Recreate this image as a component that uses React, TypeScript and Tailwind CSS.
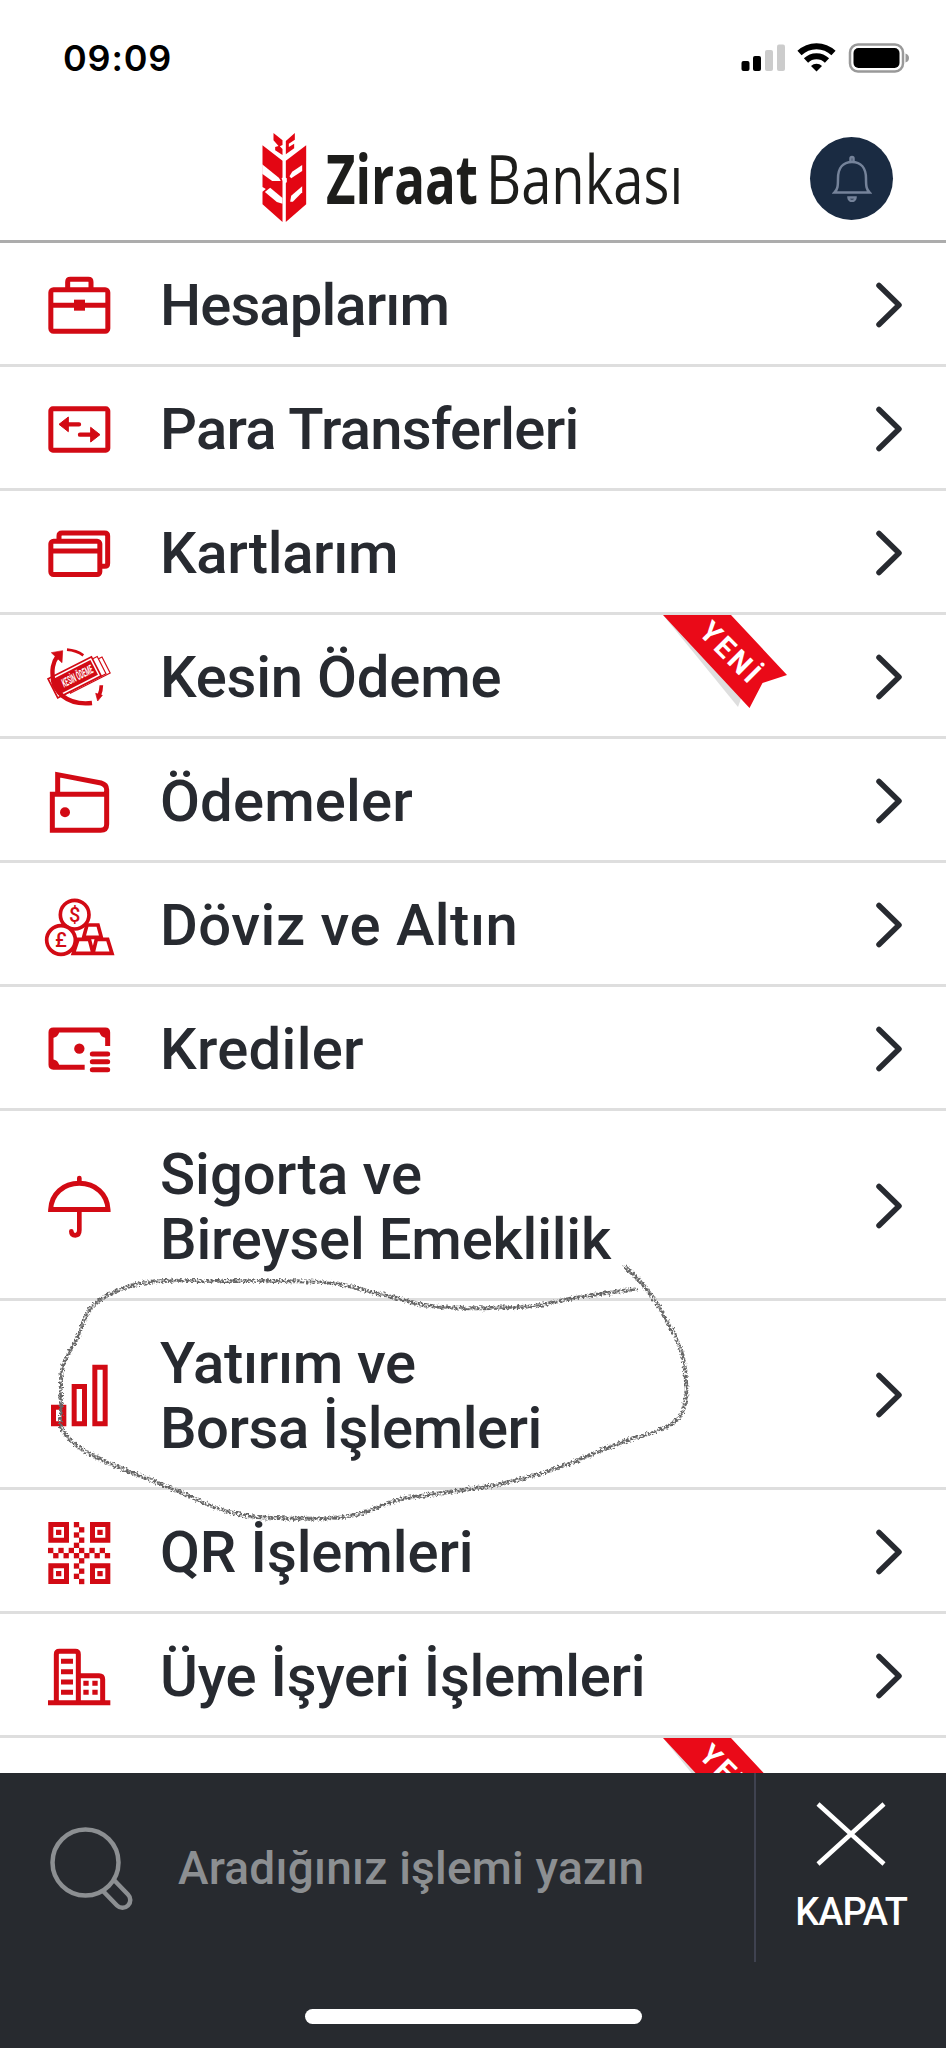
import React from 'react';
import type { ReactNode } from 'react';

const RED = '#d20a14';

const QR_DOTS = [
  [0, 5], [1, 6], [2, 5], [3, 6], [4, 5], [5, 0], [6, 1], [5, 2], [6, 3], [5, 4], [6, 5], [5, 6],
  [6, 7], [5, 8], [6, 9], [5, 10], [6, 11], [7, 6], [8, 5], [9, 6], [10, 5], [11, 6],
];

function Icon({ viewBox, children }: { viewBox: string; children: ReactNode }) {
  return (
    <svg viewBox={viewBox} className="h-[72px] w-[72px] shrink-0 overflow-visible" fill="none" stroke={RED} strokeWidth={15}>
      {children}
    </svg>
  );
}

const AccountsIcon = () => (
  <Icon viewBox="42 22 216 216">
    <rect x="62.500" y="87.500" width="171" height="124" rx="8" />
    <path d="M113 84V64q0-8 8-8h54q8 0 8 8v20M62 134h171" />
    <rect x="132" y="117" width="33" height="33" fill={RED} stroke="none" />
  </Icon>
);

const TransferIcon = () => (
  <Icon viewBox="42 394 216 216">
    <rect x="62.500" y="444.500" width="171" height="124" rx="6" />
    <path d="M112 491h35M150 522h35" strokeWidth={13} strokeLinecap="round" />
    <path d="M87 491l28-22v44zM210 522l-28-22v44z" fill={RED} strokeWidth={3} strokeLinejoin="round" />
  </Icon>
);

const CardsIcon = () => (
  <Icon viewBox="42 766 216 216">
    <rect x="62.500" y="841.500" width="147" height="100" rx="8" />
    <path d="M62 871h147M87 840v-14q0-9 9-9h128q9 0 9 9v82q0 9-9 9h-10" />
  </Icon>
);

const SurePaymentIcon = () => (
  <Icon viewBox="42 58 216 216">
    <g transform="rotate(-27 148 165)">
      <path d="M100 146h134v54H100z" fill="#fff" strokeWidth={3.5} />
      <path d="M84 138h138v58H84z" fill="#fff" strokeWidth={3.5} />
      <path d="M60 131h146v64H60z" fill="#fff" strokeWidth={5} />
      <path d="M67 138h132v50H67z" fill={RED} stroke="none" />
      <text
        x="142"
        y="176"
        textAnchor="middle"
        textLength="100"
        lengthAdjust="spacingAndGlyphs"
        fontSize="36"
        fontStyle="italic"
        fontWeight="700"
        fill="#fff"
        stroke="none"
        fontFamily="Roboto, sans-serif"
      >
        KESİN ÖDEME
      </text>
    </g>
    <path d="M70 182C64 146 68 126 84 104" strokeWidth={13} />
    <path d="M68 176C72 206 104 256 186 247" strokeWidth={13} />
    <path d="M64 96l34-6l-2 36l-12-11z" fill={RED} strokeWidth={2} />
    <path d="M111 87q28 2 49 17" strokeWidth={8} />
    <path d="M214 194q0 16-7 32" strokeWidth={11} />
    <path d="M197 218l20 6l-14 17z" fill={RED} strokeWidth={2} />
  </Icon>
);

const WalletIcon = () => (
  <Icon viewBox="42 430 216 216">
    <path d="M67 520.500h155q8 0 8 8v82q0 18-18 18H67zM83 520v-58l130 25q17 5 17 20v24" />
    <circle cx="105" cy="575" r="15" fill={RED} stroke="none" />
  </Icon>
);

const GoldIcon = () => (
  <Icon viewBox="42 802 216 216">
    <g strokeWidth={11}>
      <path d="M161 950l10-37h33l10 37zM130 998l14-42h34l11 42zM189 998l10-42h34l13 42z" />
      <circle cx="134" cy="882" r="43" fill="#fff" />
      <circle cx="93" cy="958" r="43" fill="#fff" />
    </g>
    <g fill={RED} stroke="none" textAnchor="middle" fontFamily="Roboto, sans-serif" fontWeight="500">
      <text x="134" y="903" fontSize="60">$</text>
      <text x="93" y="979" fontSize="60">£</text>
    </g>
  </Icon>
);

const LoanIcon = () => (
  <Icon viewBox="42 34 216 216">
    <path d="M164 199.500H70q-7 0-7-7V95q0-7 7-7h156q7 0 7 7v41" />
    <path d="M68 94h20q-4 16-20 18zM228 94h-20q4 16 20 18zM68 194h20q-4-16-20-18z" fill={RED} stroke="none" />
    <circle cx="148" cy="144" r="15.500" fill={RED} stroke="none" />
    <path d="M187 160h46M187 183h46M187 207h46" strokeLinecap="round" />
  </Icon>
);

const UmbrellaIcon = () => (
  <Icon viewBox="42 505 216 216">
    <path d="M62 626.500C64 580 100 548 148 548s84 32 86 78.500z" />
    <path d="M148 546v-14M148 632v57q0 15-12 15t-12-12" strokeLinecap="round" strokeWidth={14} />
  </Icon>
);

const ChartIcon = () => (
  <Icon viewBox="42 23 216 216">
    <path d="M70.500 170.500h31v50h-31zM132.500 108.500h31v112h-31zM194.500 50.500h31v170h-31z" />
  </Icon>
);

const QrIcon = () => (
  <Icon viewBox="42 492 216 216">
    <path d="M62.500 520.500h47v47h-47zM187.500 520.500h46v47h-46zM62.500 644.500h47v47h-47zM187.500 644.500h46v47h-46z" />
    <g fill={RED} stroke="none">
      <path d="M78 536h16v16H78zM202 536h16v16h-16zM78 660h16v16H78zM202 660h16v16h-16z" />
      {QR_DOTS.map(([x, y]) => (
        <rect key={`${x}-${y}`} x={54 + x * 15.5} y={513 + y * 15.5} width="16" height="16" />
      ))}
    </g>
  </Icon>
);

const MerchantIcon = () => (
  <Icon viewBox="42 864 216 216">
    <path d="M79 1050V910q0-9 9-9h48q9 0 9 9v140M145 974h62q11 0 11 11v65M54 1055.500h187" />
    <path d="M93 931h36M93 962h36M93 993h36M93 1024h36M160 997h16M187 997h16M160 1024h16M187 1024h16" />
  </Icon>
);

const MENU_ITEMS = [
  { icon: AccountsIcon, lines: [{ text: 'Hesaplarım', tracking: 'tracking-[-0.9px]' }] },
  { icon: TransferIcon, lines: [{ text: 'Para Transferleri', tracking: 'tracking-[-0.7px]' }] },
  { icon: CardsIcon, lines: [{ text: 'Kartlarım', tracking: 'tracking-[-0.35px]' }] },
  { icon: SurePaymentIcon, lines: [{ text: 'Kesin Ödeme', tracking: 'tracking-[-0.2px]' }], isNew: true },
  { icon: WalletIcon, lines: [{ text: 'Ödemeler', tracking: 'tracking-[0.15px]' }] },
  { icon: GoldIcon, lines: [{ text: 'Döviz ve Altın', tracking: 'tracking-[0.5px]' }] },
  { icon: LoanIcon, lines: [{ text: 'Krediler', tracking: 'tracking-[0.3px]' }] },
  {
    icon: UmbrellaIcon,
    lines: [
      { text: 'Sigorta ve', tracking: 'tracking-normal' },
      { text: 'Bireysel Emeklilik', tracking: 'tracking-[-0.2px]' },
    ],
    height: 'h-[190px]',
  },
  {
    icon: ChartIcon,
    lines: [
      { text: 'Yatırım ve', tracking: 'tracking-[-0.35px]' },
      { text: 'Borsa İşlemleri', tracking: 'tracking-[-0.5px]' },
    ],
    height: 'h-[189px]',
  },
  { icon: QrIcon, lines: [{ text: 'QR İşlemleri', tracking: 'tracking-[-0.1px]' }] },
  { icon: MerchantIcon, lines: [{ text: 'Üye İşyeri İşlemleri', tracking: 'tracking-[-0.25px]' }] },
];

function NewRibbon() {
  return (
    <svg viewBox="0 0 126 96" className="absolute left-[662px] top-0 h-24 w-[126px]">
      <path d="M1 0L76 92l5-14z" fill="#dedede" />
      <path d="M1 0h68l56 60l-24.500 8L87.500 93z" fill="#ea0a18" />
      <text
        x="68"
        y="37"
        transform="rotate(45 68 37)"
        textAnchor="middle"
        dominantBaseline="central"
        fontFamily="Roboto, sans-serif"
        fontWeight="700"
        fontSize="29"
        textLength="72"
        fill="#fff"
      >
        YENİ
      </text>
    </svg>
  );
}

function StatusBar() {
  return (
    <div className="flex h-[116px] items-center justify-between pl-[63px] pr-[34px]">
      <span className="font-[Inter,sans-serif] text-[36px] font-semibold tracking-[0.8px] text-black">09:09</span>
      <svg viewBox="740 40 172 36" className="h-9 w-[172px]">
        <rect x="741.500" y="61" width="8" height="10" rx="2" />
        <rect x="753" y="56" width="8" height="15" rx="2" />
        <rect x="765" y="50" width="8" height="21" rx="2" fill="#ccc" />
        <rect x="777" y="44.500" width="8" height="26.500" rx="2" fill="#ccc" />
        <g fill="none" stroke="#000" strokeWidth="6">
          <path d="M799.500 53a24.500 24.500 0 0 1 34 0M806 60.500a15 15 0 0 1 21 0" />
        </g>
        <path d="M816.500 71.500l-5.500-5.500a8 8 0 0 1 11 0z" />
        <rect x="850" y="44.500" width="53" height="27" rx="8" fill="none" stroke="#999" strokeWidth="2.500" />
        <rect x="853.500" y="48" width="46" height="20" rx="5" />
        <path d="M905.500 53.500q3.500 1 3.500 4.500t-3.500 4.500z" fill="#999" />
      </svg>
    </div>
  );
}

function Header() {
  return (
    <header className="h-[243px] border-b-[3px] border-[#acacac]">
      <StatusBar />
      <div className="flex h-[124px] items-center pl-[262px] pr-[53px]">
        {/* wheat ear */}
        <svg viewBox="68 38 134 270" className="h-[90px] w-[45px] shrink-0" fill="#e30613">
          <path d="M102 38l27 22v14l-8 4l8 8v18l-22-14V80l10-3l-15-17z" />
          <path d="M166 38v20l-18 12v10l16-10v14l-25 18V62z" />
          <path d="M69 75l60 46v184l-60-53v-38l10-8l-10-6z" />
          <path d="M200 75l-61 46v184l61-53z" />
          <g fill="#fff">
            <path d="M68 132l50 40l6 10H98l-30-22z" />
            <path d="M92 202l37 31v17l-17-5l-36-30z" />
            <path d="M188 134v18l-33 22l-5-6l8-14z" />
            <path d="M188 198v18l-28 28h-8l3-18z" />
            <path d="M126 174l8-4l8 4v12l-8 4z" />
          </g>
        </svg>
        <div className="ml-[19px] flex w-[370px] items-center whitespace-nowrap font-['Open_Sans',sans-serif] text-[68px] leading-none text-[#1d1d1b]">
          <span className="w-[160px] origin-left scale-x-[0.75] font-bold">Ziraat</span>
          <span className="origin-left scale-x-[0.8] font-[450]">Bankası</span>
        </div>
        <div className="ml-auto flex h-[83px] w-[83px] items-center justify-center rounded-full bg-[#1a2b42]">
          <svg viewBox="0 0 40 48" className="h-12 w-10" fill="none" stroke="#75839a" strokeWidth="2.500">
            <path d="M2.500 38.500c3-3 3.500-6 3.500-14C6 14 11 8 20 8s14 6 14 16.500c0 8 .5 11 3.500 14z" />
            <path d="M18.500 7V4.500a1.500 1.500 0 0 1 3 0V7M16.500 43.500a3.500 3.500 0 0 0 7 0z" />
          </svg>
        </div>
      </div>
    </header>
  );
}

function MenuList() {
  return (
    <nav>
      {MENU_ITEMS.map(({ lines, icon: ItemIcon, height, isNew }) => (
        <a
          key={lines[0].text}
          className={`relative flex items-center border-b-[3px] border-[#dedede] px-11 ${height ?? 'h-[124px]'}`}
        >
          <ItemIcon />
          <span className="ml-11 flex flex-col whitespace-nowrap pt-1 text-[58px] font-medium leading-[65px]">
            {lines.map(({ text, tracking }) => (
              <span key={text} className={tracking}>{text}</span>
            ))}
          </span>
          <svg viewBox="0 0 26 46" className="ml-auto mt-0.5 h-[46px] w-[26px]" fill="none" stroke="#272a30" strokeWidth="5.500">
            <path d="M3 3.500l20 19.500L3 42.500" strokeLinecap="round" strokeLinejoin="round" />
          </svg>
          {isNew && <NewRibbon />}
        </a>
      ))}
      <div className="relative h-[35px] overflow-hidden">
        <NewRibbon />
      </div>
    </nav>
  );
}

function SearchFooter() {
  return (
    <footer className="flex h-[275px] flex-col items-center bg-[#272a2f]">
      <div className="flex h-[189px] w-full">
        <div className="flex flex-1 items-center border-r-2 border-[#3f4250] pl-[50px] pt-0.5">
          <svg viewBox="0 0 84 84" className="h-[84px] w-[84px]" fill="none" stroke="#8c8f92" strokeWidth="4.500">
            <circle cx="35.500" cy="35.500" r="33" />
            <path d="M53 64l14 14.500a7.500 7.500 0 0 0 11-11L64 53" />
          </svg>
          <span className="ml-11 whitespace-nowrap text-[46px] font-medium tracking-[0.2px] text-[#8c8f92]">
            Aradığınız işlemi yazın
          </span>
        </div>
        <button className="flex w-[190px] flex-col items-center pt-[29px] text-white">
          <svg viewBox="0 0 72 64" className="h-16 w-[72px]" stroke="currentColor" strokeWidth="4.500">
            <path d="M3 2l66 60M69 2L3 62" />
          </svg>
          <span className="mt-[21px] text-[38px] font-medium leading-[50px] tracking-[-1px]">KAPAT</span>
        </button>
      </div>
      <div className="mt-[47px] h-[15px] w-[337px] rounded-full bg-white" />
    </footer>
  );
}

// Freehand pencil loop around the investment row
function PencilLoop() {
  return (
    <svg viewBox="0 0 720 300" className="pointer-events-none absolute left-0 top-[1240px] h-[300px] w-[720px]" fill="none">
      <filter id="pencil" x="-5%" y="-5%" width="110%" height="110%">
        <feTurbulence type="fractalNoise" baseFrequency="0.45" numOctaves="2" seed="4" result="noise" />
        <feDisplacementMap in="SourceGraphic" in2="noise" scale="5" xChannelSelector="R" yChannelSelector="G" result="rough" />
        <feColorMatrix in="noise" type="matrix" values="0 0 0 0 0  0 0 0 0 0  0 0 0 0 0  0 0 4 0 -1.2" result="grain" />
        <feComposite in="rough" in2="grain" operator="in" />
      </filter>
      <path
        filter="url(#pencil)"
        stroke="#666"
        strokeWidth="4"
        d="M638 49C615 52 595 54 574 58S540 67 519 67S485 69 464 68S430 67 418 64S395 57 376 53S350 45 331 43S300 41 275 41H184Q160 40 142 43Q118 48 101 59Q88 68 83 83T69 113Q61 125 61 140V187Q66 199 83 210Q108 224 138 235T202 262Q230 275 257 277Q300 280 331 278Q350 277 367 272Q390 260 413 257T496 245Q538 236 574 222Q606 208 634 198Q652 194 666 187Q680 180 682 173Q688 155 686 143Q686 130 682 113Q677 97 666 80Q659 64 647 50Q639 39 624 26"
      />
    </svg>
  );
}

export default function App() {
  return (
    <div className="relative h-[2048px] w-[946px] overflow-hidden bg-white font-[Roboto,sans-serif] text-[#272a30]">
      <Header />
      <MenuList />
      <SearchFooter />
      <PencilLoop />
    </div>
  );
}
